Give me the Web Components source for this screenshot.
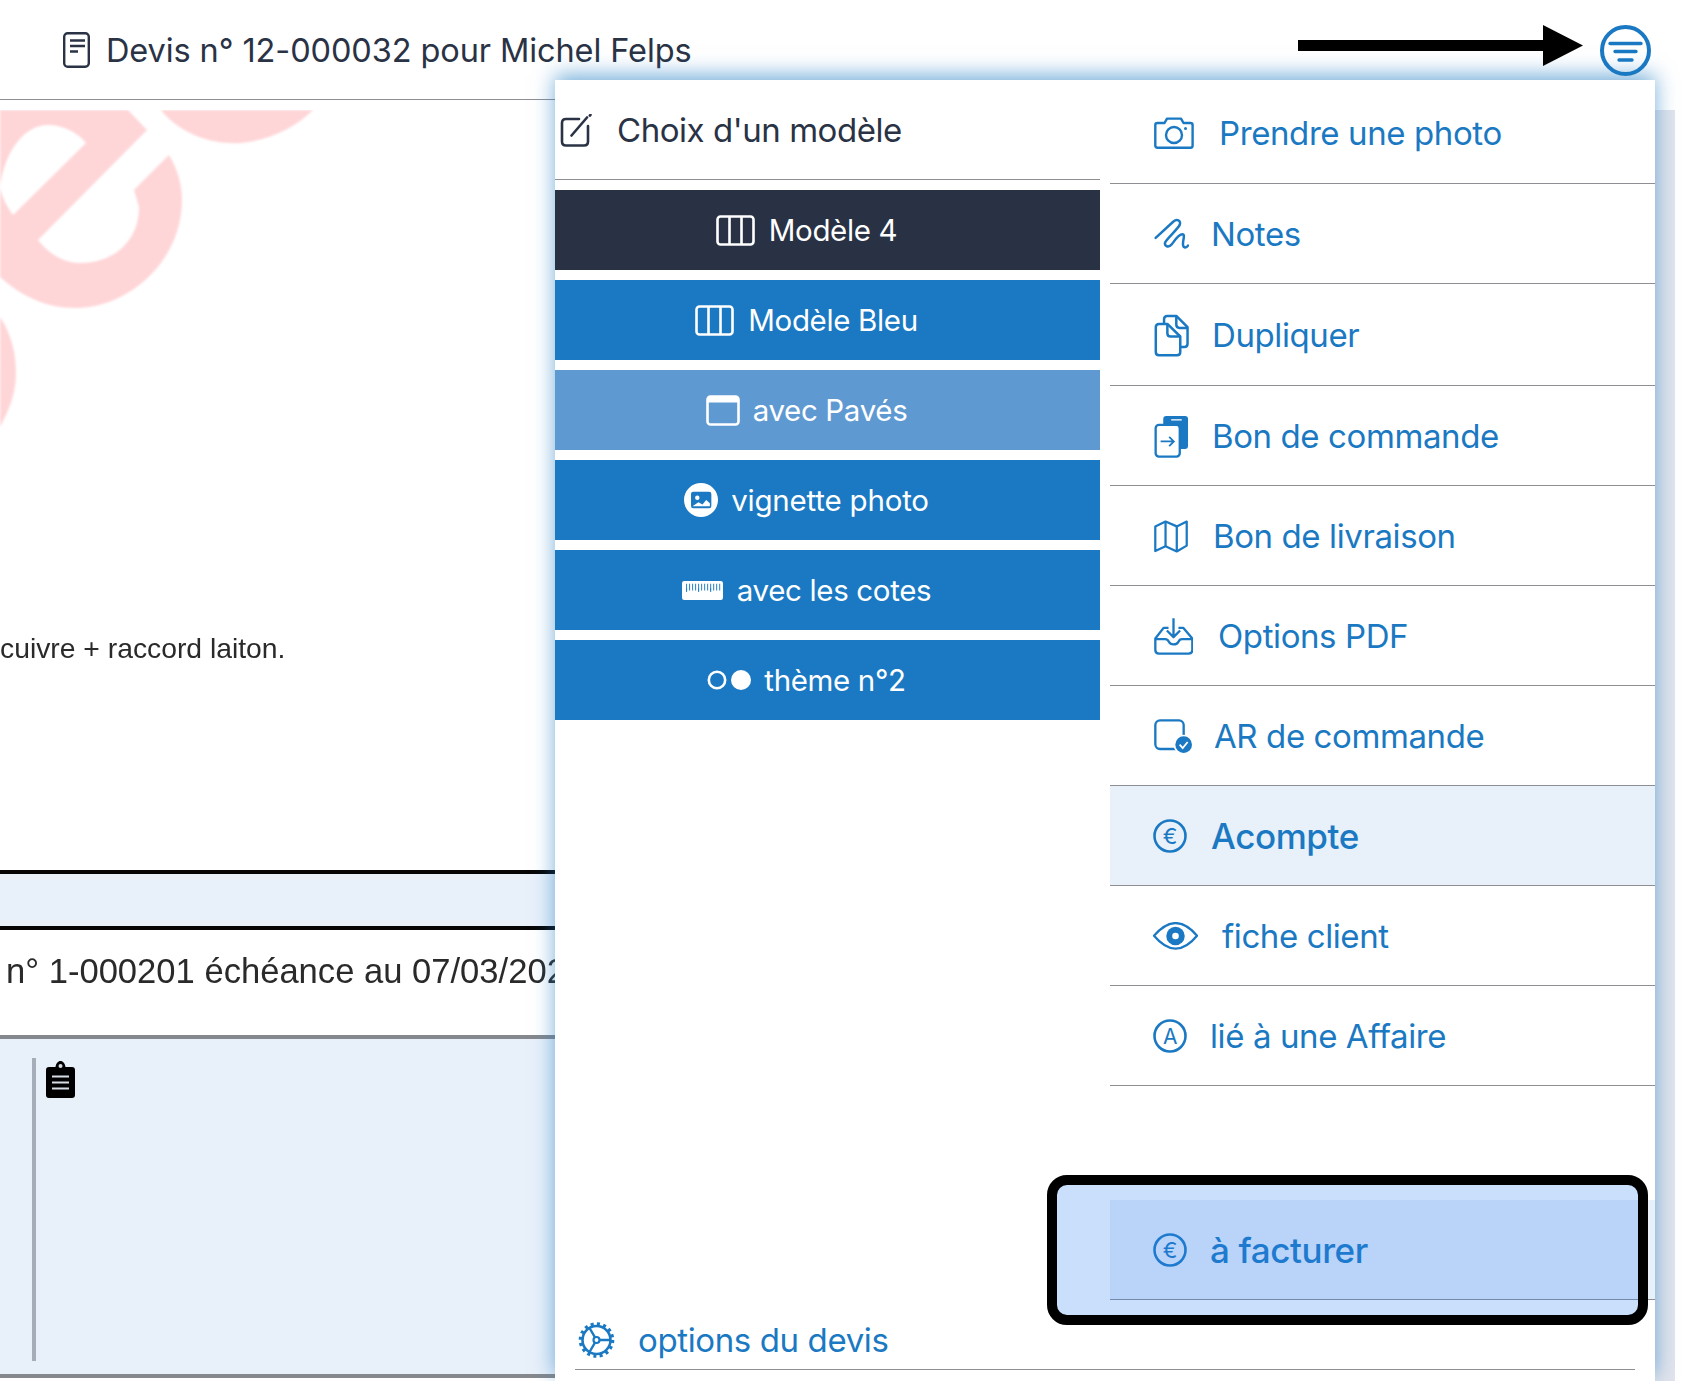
<!DOCTYPE html>
<html lang="fr">
<head>
<meta charset="utf-8">
<title>Devis</title>
<style>
html,body{margin:0;padding:0;background:#fff}
body{font-family:Inter,"Liberation Sans",sans-serif}
</style>
</head>
<body>
<devis-page>
  <devis-header>Devis n° 12-000032 pour Michel Felps</devis-header>
  <devis-doc></devis-doc>
  <options-panel>
    <model-button slot="models" icon="columns" tone="dark">Modèle 4</model-button>
    <model-button slot="models" icon="columns">Modèle Bleu</model-button>
    <model-button slot="models" icon="window" tone="light" style="--bgap:13px">avec Pavés</model-button>
    <model-button slot="models" icon="photo" style="--ls:-.2px;--bgap:13px">vignette photo</model-button>
    <model-button slot="models" icon="ruler">avec les cotes</model-button>
    <model-button slot="models" icon="dots" style="--bgap:13px">thème n°2</model-button>

    <action-row slot="actions" icon="camera" style="--h:104px;--gap:25px;--pt:3px">Prendre une photo</action-row>
    <action-row slot="actions" icon="notes" style="--h:100px;--gap:22px">Notes</action-row>
    <action-row slot="actions" icon="copy" style="--h:102px;--gap:23px">Dupliquer</action-row>
    <action-row slot="actions" icon="order" style="--h:100px;--gap:23px">Bon de commande</action-row>
    <action-row slot="actions" icon="map" style="--h:100px;--gap:25px">Bon de livraison</action-row>
    <action-row slot="actions" icon="inbox" style="--h:100px;--gap:25px">Options PDF</action-row>
    <action-row slot="actions" icon="ack" style="--h:100px;--gap:22px">AR de commande</action-row>
    <action-row slot="actions" icon="euro" active style="--h:100px;--gap:23px">Acompte</action-row>
    <action-row slot="actions" icon="eye" style="--h:100px;--gap:23px">fiche client</action-row>
    <action-row slot="actions" icon="affair" style="--h:100px;--gap:22px">lié à une Affaire</action-row>
    <action-row slot="billing" icon="euro" active style="--h:100px;--gap:22px">à facturer</action-row>
  </options-panel>
  <callout-arrow></callout-arrow>
  <callout-box></callout-box>
</devis-page>

<script>
const ICONS = {
  columns:`<svg width="39" height="31" viewBox="0 0 39 31" fill="none" stroke="currentColor" stroke-width="2.6"><rect x="1.5" y="1.5" width="36" height="28" rx="3"/><path d="M13.5 1.5V29.5M25.5 1.5V29.5"/></svg>`,
  window:`<svg width="34" height="31" viewBox="0 0 34 31" fill="none"><rect x="1.5" y="1.5" width="31" height="28" rx="3" stroke="currentColor" stroke-width="2.6"/><path d="M1.5 7.5V4.5a3 3 0 0 1 3-3h25a3 3 0 0 1 3 3v3z" fill="currentColor"/></svg>`,
  photo:`<svg width="34" height="34" viewBox="389 849 92 92"><circle cx="435" cy="895" r="46" fill="currentColor"/><rect x="408" y="873" width="55" height="44" rx="6" fill="#1a79c2"/><circle cx="425" cy="889" r="6" fill="#fff"/><path d="M412 912l16-11 11 6 10-12 10 9v8z" fill="#fff"/></svg>`,
  ruler:`<svg width="41" height="19" viewBox="387 1122 109 50"><rect x="387" y="1122" width="109" height="50" rx="6" fill="currentColor"/><path d="M398 1128h90v22h-90z" fill="#fff"/><path d="M398 1138H490" stroke="#1a79c2" stroke-width="18" stroke-dasharray="2.5 5.500"/><path d="M398 1146H490" stroke="#1a79c2" stroke-width="10" stroke-dasharray="2.5 29.500"/></svg>`,
  dots:`<svg width="44" height="20" viewBox="0 0 44 20"><circle cx="10" cy="10" r="8.200" fill="none" stroke="currentColor" stroke-width="2.6"/><circle cx="34" cy="10" r="10" fill="currentColor"/></svg>`,
  camera:`<svg width="40" height="32" viewBox="0 0 40 32" fill="none" stroke="currentColor" stroke-width="2.4" stroke-linejoin="round"><path d="M3.5 6H10.5L13 1.600H27L29.500 6H36.500Q38.600 6 38.600 8V28.500Q38.600 30.800 36.500 30.800H3.500Q1.300 30.800 1.300 28.500V8Q1.300 6 3.500 6Z"/><circle cx="20" cy="18" r="8"/><circle cx="31.500" cy="11.500" r="1.500" fill="currentColor" stroke="none"/></svg>`,
  notes:`<svg width="35" height="32" viewBox="22 27 106 96" fill="none" stroke="currentColor" stroke-width="7.5" stroke-linecap="round" stroke-linejoin="round"><path d="M27 87L80 38C92 28 104 34 100 47C96 58 60 90 56 100C52 112 66 118 76 106C84 96 96 76 108 76C118 76 108 96 110 108C111 118 120 118 125 110"/></svg>`,
  copy:`<svg width="35" height="43" viewBox="25 310 105 130" fill="none" stroke="currentColor" stroke-width="7.5" stroke-linejoin="round"><path d="M55 338V326Q55 316 65 316H92L126 350V400Q126 410 116 410H104"/><path d="M92 316V342Q92 352 102 352H126"/><path d="M40 340H65L104 378V425Q104 435 94 435H40Q30 435 30 425V350Q30 340 40 340Z"/><path d="M65 340V368Q65 378 75 378H104"/></svg>`,
  order:`<svg width="35" height="43" viewBox="100 42 106 130" fill="none"><rect x="128" y="45" width="75" height="100" rx="9" fill="currentColor"/><rect x="152" y="54" width="32" height="5" fill="#cfe2f3"/><rect x="105" y="72" width="73" height="96" rx="10" fill="#fff" stroke="currentColor" stroke-width="7"/><path d="M120 122H160M146 108L160 122L146 136" stroke="currentColor" stroke-width="5.500"/></svg>`,
  map:`<svg width="34" height="33" viewBox="101 356 106 101" fill="none" stroke="currentColor" stroke-width="7" stroke-linejoin="round"><path d="M105 375L137 360L172 375L203 360V435L172 453L137 437L105 452Z"/><path d="M137 360V437M172 375V453"/></svg>`,
  inbox:`<svg width="39" height="37" viewBox="101 658 118 112" fill="none" stroke="currentColor" stroke-width="7" stroke-linejoin="round"><path d="M145 688H130L105 720V755Q105 766 116 766H206Q217 766 217 755V720L190 688H175"/><path d="M105 722H135Q142 722 146 730Q150 738 160 738Q170 738 175 730Q178 722 186 722H217"/><path d="M160 659V715M140 696L160 716L180 696"/></svg>`,
  ack:`<svg width="38" height="34" viewBox="101 53 114 102"><rect x="105" y="57" width="85" height="86" rx="14" fill="none" stroke="currentColor" stroke-width="7"/><circle cx="190" cy="130" r="30" fill="#fff"/><circle cx="190" cy="130" r="25" fill="currentColor"/><path d="M178 130L187 140L202 122" fill="none" stroke="#fff" stroke-width="5.500"/></svg>`,
  euro:`<svg width="34" height="34" viewBox="0 0 34 34" style="margin:0 1px 0 -1px"><circle cx="17" cy="17" r="15.500" fill="none" stroke="currentColor" stroke-width="2.600"/><text x="17" y="24.500" text-anchor="middle" font-family="Inter,'Liberation Sans',sans-serif" font-size="22" font-weight="400" fill="currentColor">€</text></svg>`,
  affair:`<svg width="34" height="34" viewBox="0 0 34 34" style="margin:0 1px 0 -1px"><circle cx="17" cy="17" r="15.500" fill="none" stroke="currentColor" stroke-width="2.600"/><text x="17" y="24.500" text-anchor="middle" font-family="Inter,'Liberation Sans',sans-serif" font-size="21" fill="currentColor">A</text></svg>`,
  eye:`<svg width="45" height="28" viewBox="99 665 136 84" style="margin:0 1px 0 -1px"><path d="M102 706C125 680 145 668 167 668C190 668 210 680 232 706C210 733 190 745 167 745C145 745 125 733 102 706Z" fill="none" stroke="currentColor" stroke-width="7" stroke-linejoin="round"/><circle cx="167" cy="707" r="28" fill="currentColor"/><circle cx="167" cy="707" r="10" fill="#fff"/></svg>`,
  gear:`<svg width="37" height="36" viewBox="0 0 37 36" fill="none" stroke="currentColor"><circle cx="18.5" cy="18" r="14" stroke-width="2.6"/><circle cx="18.5" cy="18" r="16" stroke-width="3.6" stroke-dasharray="3 3.280"/><circle cx="18.5" cy="18" r="3" stroke-width="2.2"/><path d="M21.5 18H32M17 15.400L11.500 6M17 20.600L11.500 30" stroke-width="2.4"/></svg>`,
  doc:`<svg width="27" height="36" viewBox="0 0 27 36" fill="none" stroke="currentColor" stroke-width="2.4"><rect x="1.200" y="1.200" width="24.600" height="33.600" rx="3.500"/><path d="M7 8.500H22M7 14H22M7 19.500H15"/></svg>`,
  compose:`<svg width="33" height="33" viewBox="0 0 33 33" fill="none" stroke="currentColor" stroke-width="2.6" stroke-linecap="round"><path d="M19 5H6Q2 5 2 9V27.500Q2 31.500 6 31.500H24Q28 31.500 28 27.500V12"/><path d="M11.500 21.500L27 3.500M30.500 .8L29.800 1.600"/></svg>`,
  menu:`<svg width="51" height="51" viewBox="0 0 51 51" fill="none" stroke="#1a79c2" stroke-width="3.4"><circle cx="25.5" cy="25.5" r="23.500" stroke-width="4"/><path d="M10 18.500H41M15 26.500H36M19 35H32" stroke-linecap="round"/></svg>`
};

function make(name, css, html){
  customElements.define(name, class extends HTMLElement{
    constructor(){
      super();
      this.attachShadow({mode:'open'}).innerHTML = `<style>${css}</style>${html}`;
    }
    connectedCallback(){
      this.shadowRoot.querySelectorAll('[data-icon]').forEach(n=>{
        const k=n.dataset.icon==='attr'?this.getAttribute('icon'):n.dataset.icon;
        n.innerHTML=ICONS[k]||'';
      });
    }
  });
}

make('devis-page',`
  :host{display:block;position:relative;width:1681px;height:1381px;overflow:hidden;background:#fff;
    font-family:Inter,"Liberation Sans",sans-serif}
`,`<slot></slot>`);

make('devis-header',`
  :host{display:flex;align-items:center;position:relative;box-sizing:border-box;height:100px;
    padding:0 30px 0 63px;color:#2a3345;font-size:32.5px;letter-spacing:-.1px}
  :host::after{content:"";position:absolute;left:0;bottom:0;width:555px;height:1px;background:#8e8e93}
  .ic{display:flex;margin-right:16px}
  .t{flex:1;white-space:nowrap}
  .m{display:flex}
`,`<span class="ic" data-icon="doc"></span><span class="t"><slot></slot></span><span class="m" data-icon="menu"></span>`);

make('devis-doc',`
  :host{display:flex;height:1281px;padding:10px 6px 0 0;box-sizing:border-box}
  .main{flex:1;position:relative;overflow:hidden;min-width:0;background:#fff}
  .strip{width:20px;background:#e2e4ec}
  .mark{position:absolute;left:0;top:0;filter:blur(1px)}
  .flow{position:relative;font-family:"Liberation Sans",Arial,sans-serif;color:#2a2a2a}
  .line{margin-top:523px;height:30px;line-height:30px;font-size:28.3px;filter:blur(.5px);white-space:nowrap}
  .band{margin-top:207px;height:60px;box-sizing:border-box;background:#e8f0fa;border-top:4px solid #050505;border-bottom:4px solid #050505;filter:blur(.3px)}
  .due{height:105px;padding-top:17px;box-sizing:border-box;line-height:48px;font-size:34.6px;padding-left:6px;white-space:nowrap;filter:blur(.5px);color:#2a2a2a}
  .box{display:flex;height:343px;box-sizing:border-box;background:#e8f0fa;border-top:4px solid #85888d;border-bottom:4px solid #85888d;padding:19px 0 0 32px;align-items:flex-start;filter:blur(.3px)}
  .bar{width:4px;height:303px;background:#a5adb9}
  .clip{margin:3px 0 0 10px;display:flex;filter:blur(.6px)}
`,`
  <div class="main">
    <svg class="mark" width="330" height="330" viewBox="0 110 330 330" fill="#ffd6d8">
      <path d="M161 110C180 135 215 145 241 143C270 140 295 128 313 110Z"/>
      <path fill-rule="evenodd" d="M0 110H128L147 130L38 240C50 255 65 263 80 263C115 263 139 240 139 207L134 190L169 155C178 170 182 185 182 200C182 260 130 308 75 308C45 308 20 295 0 277ZM0 187C5 150 25 125 48 125C65 125 80 135 86 143L13 215C6 205 2 197 0 187Z"/>
      <path d="M0 317C12 335 16 355 16 373C16 395 8 412 0 427Z"/>
    </svg>
    <div class="flow">
      <div class="line">cuivre + raccord laiton.</div>
      <div class="band"></div>
      <div class="due">n° 1-000201 échéance au 07/03/202</div>
      <div class="box"><div class="bar"></div>
        <div class="clip"><svg width="29" height="37" viewBox="0 0 29 37"><path d="M3 6H9.500C10 2.500 12 0 14.500 0S19 2.500 19.500 6H26Q29 6 29 9V34Q29 37 26 37H3Q0 37 0 34V9Q0 6 3 6Z" fill="#000"/><path d="M6 15.500H23M6 21.500H23M6 27.500H23" stroke="#d8dde5" stroke-width="2"/><circle cx="14.500" cy="5" r="2" fill="#d8dde5"/></svg></div>
      </div>
    </div>
  </div>
  <div class="strip"></div>
`);

make('options-panel',`
  :host{position:absolute;left:555px;top:80px;width:1100px;height:1301px;background:#fff;display:flex;flex-direction:column;
    box-shadow:0 -5px 20px rgba(26,121,194,.6)}
  .cols{display:flex;gap:10px;height:1230px}
  .left{width:545px;display:flex;flex-direction:column}
  .title{display:flex;align-items:center;height:100px;box-sizing:border-box;border-bottom:1px solid #8e8e93;padding:0 0 0 5px;color:#2a3345;font-size:33px;letter-spacing:-.45px;white-space:nowrap}
  .title span{display:flex;margin-right:24px;margin-top:2px}
  .models{display:flex;flex-direction:column;gap:10px;margin-top:10px}
  .right{width:545px;display:flex;flex-direction:column}
  .bill{margin-top:114px}
  .foot{display:flex;align-items:center;box-sizing:border-box;height:60px;margin:0 20px;padding:0 0 0 3px;border-bottom:1px solid #8e8e93;color:#1a79c2;font-size:33px;letter-spacing:-.38px;white-space:nowrap}
  .foot span{display:flex;margin-right:23px}
`,`
  <div class="cols">
    <div class="left">
      <div class="title"><span data-icon="compose"></span>Choix d'un modèle</div>
      <div class="models"><slot name="models"></slot></div>
    </div>
    <div class="right">
      <slot name="actions"></slot>
      <div class="bill"><slot name="billing"></slot></div>
    </div>
  </div>
  <div class="foot"><span data-icon="gear"></span>options du devis</div>
`);

make('model-button',`
  :host{display:flex;align-items:center;justify-content:center;height:80px;box-sizing:border-box;padding-right:42px;
    background:#1a79c2;color:#fff;font-size:29.5px;letter-spacing:var(--ls,-.35px);white-space:nowrap}
  :host([tone="dark"]){background:#293244}
  :host([tone="light"]){background:#5f99d2}
  span{display:flex;margin-right:var(--bgap,14px)}
`,`<span data-icon="attr"></span><slot></slot>`);

make('action-row',`
  :host{display:flex;align-items:center;box-sizing:border-box;height:var(--h,100px);padding:var(--pt,1px) 0 0 44px;border-bottom:1px solid #8e8e93;
    color:#1a79c2;font-size:33px;letter-spacing:-.4px;white-space:nowrap}
  :host([active]){background:#e8f0fa;font-weight:500;font-size:35px}
  span{display:flex;margin-right:var(--gap,25px)}
`,`<span data-icon="attr"></span><slot></slot>`);

make('callout-arrow',`
  :host{position:absolute;left:1298px;top:25px;width:285px;height:41px;display:block}
  svg{display:block}
`,`<svg width="285" height="41" viewBox="0 0 285 41"><path d="M0 15H245V0L285 20.500L245 41V26H0Z" fill="#000"/></svg>`);

make('callout-box',`
  :host{position:absolute;left:1047px;top:1175px;width:601px;height:150px;box-sizing:border-box;display:block;
    border:10px solid #000;border-radius:20px;background:rgba(43,127,245,.25);pointer-events:none}
`,``);
</script>
</body>
</html>
